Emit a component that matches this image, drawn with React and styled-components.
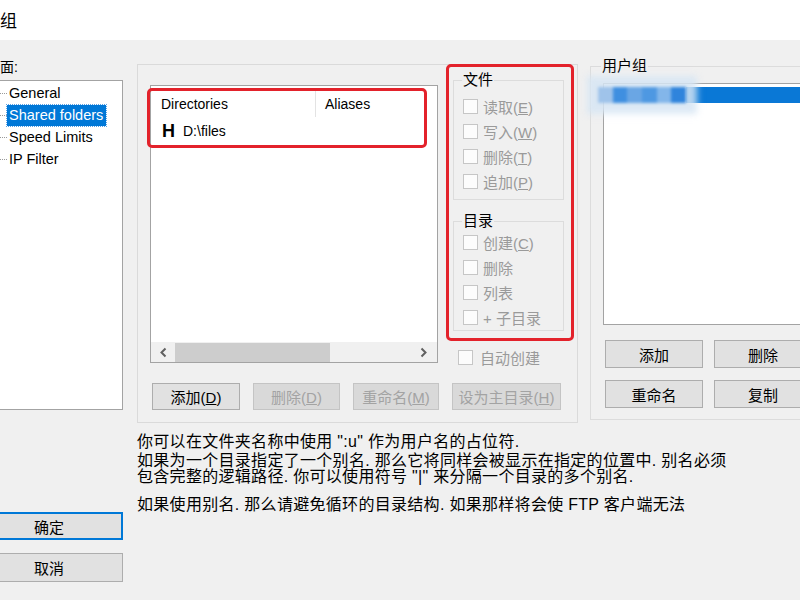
import React from "react";
import styled, { createGlobalStyle } from "styled-components";

const UI_FONT = `"Liberation Sans", "Noto Sans CJK SC", sans-serif`;

const GlobalStyle = createGlobalStyle`
  html, body { margin: 0; padding: 0; background: #f0f0f0; }
  body { font-family: ${UI_FONT}; }
  * { box-sizing: border-box; }
`;

const Window = styled.div`
  width: 800px;
  height: 600px;
  overflow: hidden;
  background: #f0f0f0;
  display: flex;
  flex-direction: column;
  color: #000;
  font-family: ${UI_FONT};
`;

const TitleBar = styled.div`
  height: 40px;
  flex: none;
  background: #fff;
  display: flex;
  align-items: center;
  font-size: 17px;
  padding-bottom: 1px;
`;

const Body = styled.div`
  display: flex;
  align-items: flex-start;
  flex: 1;
`;

// left column: page tree + OK / cancel
const LeftCol = styled.div`
  flex: none;
  width: 148px;
  margin-left: -25px;
  padding-top: 19px;
  display: flex;
  flex-direction: column;
`;

const PageLabel = styled.div`
  height: 16px;
  line-height: 16px;
  font-size: 14px;
  padding-left: 25px;
  white-space: nowrap;
`;

const Tree = styled.div`
  margin-top: 5px;
  height: 330px;
  border: 1px solid #a3a3a3;
  background: #fff;
  padding: 1px 0 0 24px;
`;

const TreeItem = styled.div`
  height: 22px;
  display: flex;
  align-items: center;
`;

const Connector = styled.span`
  width: 7px;
  border-top: 1px dotted #9a9a9a;
`;

const ItemLabel = styled.span`
  height: 21px;
  line-height: 21px;
  padding: 0 3px 0 2px;
  font-size: 14.5px;
  white-space: nowrap;
  background: ${(p) => (p.$selected ? "#0078d7" : "transparent")};
  color: ${(p) => (p.$selected ? "#fff" : "#000")};
  outline: ${(p) => (p.$selected ? "1px dotted #5aa2e6" : "none")};
`;

const DialogButton = styled.button`
  width: 148px;
  height: ${(p) => p.$h}px;
  margin-top: ${(p) => p.$mt}px;
  background: #e1e1e1;
  border: ${(p) => (p.$default ? "2px solid #0078d7" : "1px solid #adadad")};
  font-family: ${UI_FONT};
  font-size: 15px;
  color: #000;
  padding: 0;
`;

// right area: panel, user groups, help text
const RightArea = styled.div`
  flex: none;
  margin-left: 14px;
  padding-top: 17px;
  display: flex;
  flex-direction: column;
`;

const TopRow = styled.div`
  display: flex;
  align-items: flex-start;
`;

const Panel = styled.div`
  margin-top: 7px;
  width: 441px;
  height: 359px;
  border: 1px solid #dadada;
  display: flex;
  flex-direction: column;
`;

const PanelTop = styled.div`
  display: flex;
  align-items: flex-start;
  padding-left: 12px;
`;

const DirList = styled.div`
  margin-top: 20px;
  width: 288px;
  height: 278px;
  border: 1px solid #a3a3a3;
  background: #fff;
  display: flex;
  flex-direction: column;
`;

const ListContent = styled.div`
  flex: 1;
`;

const Highlight = styled.div`
  width: 280px;
  margin: 2px 0 0 -4px;
  border: 3px solid #e3222b;
  border-radius: 5px;
`;

const ListHeader = styled.div`
  height: 26px;
  display: flex;
  font-size: 14px;
`;

const HeaderCell = styled.div`
  width: ${(p) => p.$w};
  padding-left: ${(p) => p.$pl}px;
  display: flex;
  align-items: center;
  border-right: ${(p) => (p.$sep ? "1px solid #e3e3e3" : "none")};
`;

const ListRow = styled.div`
  height: 28px;
  display: flex;
  align-items: center;
  padding-left: 12px;
  gap: 8px;
  font-size: 14px;
`;

const HomeMark = styled.span`
  font-weight: bold;
  font-size: 18px;
`;

const ScrollBar = styled.div`
  height: 20px;
  display: flex;
  align-items: center;
  background: #f0f0f0;
`;

const ScrollArrow = styled.div`
  width: ${(p) => p.$w}px;
  height: 20px;
  display: flex;
  align-items: center;
  justify-content: center;
`;

const ScrollThumb = styled.div`
  width: 155px;
  height: 19px;
  background: #cdcdcd;
`;

const ScrollTrack = styled.div`
  flex: 1;
`;

const ChecksCol = styled.div`
  margin-left: 8px;
  margin-top: -1px;
  display: flex;
  flex-direction: column;
`;

const RedFrame = styled.div`
  width: 128px;
  height: 277px;
  border: 3px solid #e3222b;
  border-radius: 5px;
  padding: 0 7px 0 4px;
`;

const Group = styled.fieldset`
  margin: ${(p) => p.$mt}px 0 0 0;
  padding: ${(p) => p.$pt}px 0 ${(p) => p.$pb}px 8px;
  border: 1px solid #dcdcdc;
  min-width: 0;
`;

const Legend = styled.legend`
  padding: 0 1px;
  margin-left: ${(p) => p.$ml || 0}px;
  font-size: 15px;
  line-height: 18px;
  height: 18px;
`;

const CheckRow = styled.div`
  height: ${(p) => p.$h || 25}px;
  margin-top: ${(p) => p.$mt || 0}px;
  display: flex;
  align-items: center;
  gap: ${(p) => p.$gap || 5}px;
  padding-left: ${(p) => p.$pl || 1}px;
  font-size: 15px;
  color: #9a9a9a;
  white-space: nowrap;
`;

const CheckBox = styled.span`
  width: 15px;
  height: 15px;
  flex: none;
  border: 1px solid #c6c6c6;
  background: #fcfcfc;
`;

const ButtonRow = styled.div`
  display: flex;
  gap: 13px;
  margin-top: 17px;
  padding-left: 14px;
`;

const Button = styled.button`
  width: ${(p) => p.$w}px;
  height: ${(p) => p.$h || 27}px;
  padding: 0;
  background: ${(p) => (p.disabled ? "#d9d9d9" : "#e1e1e1")};
  border: 1px solid ${(p) => (p.disabled ? "#c4c4c4" : "#adadad")};
  color: ${(p) => (p.disabled ? "#a3a3a3" : "#000")};
  font-family: ${UI_FONT};
  font-size: 15px;
  white-space: nowrap;
`;

const UserGroups = styled.fieldset`
  margin: 0 0 0 12px;
  width: 240px;
  padding: 8px 0 11px 12px;
  border: 1px solid #dcdcdc;
  min-width: 0;
`;

const UserList = styled.div`
  height: 242px;
  border: 1px solid #a3a3a3;
  background: #fff;
  padding-top: 3px;
`;

const BlurredRow = styled.div`
  height: 16px;
  display: flex;
`;

const Mosaic = styled.div`
  width: 88px;
  margin-left: -6px;
  display: flex;
  filter: blur(1.5px);
  box-shadow: 0 0 6px 11px rgba(214, 229, 243, 0.85);
  background: rgba(214, 229, 243, 0.85);
`;

const MosaicCell = styled.span`
  flex: 1;
  background: ${(p) => p.$c};
`;

const SelectedBar = styled.div`
  flex: 1;
  background: #0a78d6;
`;

const UserButtons = styled.div`
  margin-top: 15px;
  padding-left: 2px;
  display: grid;
  grid-template-columns: 98px 98px;
  grid-auto-rows: 28px;
  column-gap: 11px;
  row-gap: 12px;
`;

const Help = styled.div`
  margin-top: 11px;
  font-size: 16px;
  line-height: 16px;
  letter-spacing: 0.3px;
  white-space: nowrap;
`;

const HelpPara = styled.p`
  margin: 0 0 ${(p) => p.$mb}px 0;
`;

const Chevron = ({ dir }) => (
  <svg width="9" height="11" viewBox="0 0 9 11">
    <path
      d={dir === "left" ? "M6.5 1.5 L2.5 5.5 L6.5 9.5" : "M2.5 1.5 L6.5 5.5 L2.5 9.5"}
      fill="none"
      stroke="#606060"
      strokeWidth="2"
    />
  </svg>
);

const fileChecks = [
  ["读取", "E"],
  ["写入", "W"],
  ["删除", "T"],
  ["追加", "P"],
];

const dirChecks = [["创建", "C"], ["删除"], ["列表"], ["+ 子目录"]];

const mosaicColors = ["#9fc3ea", "#3f8fe0", "#6aa6e4", "#4e98e2", "#83b6ea", "#2f84dc"];

function App() {
  return (
    <Window>
      <GlobalStyle />
      <TitleBar>组</TitleBar>
      <Body>
        <LeftCol>
          <PageLabel>面:</PageLabel>
          <Tree>
            <TreeItem>
              <Connector />
              <ItemLabel>General</ItemLabel>
            </TreeItem>
            <TreeItem>
              <Connector />
              <ItemLabel $selected>Shared folders</ItemLabel>
            </TreeItem>
            <TreeItem>
              <Connector />
              <ItemLabel>Speed Limits</ItemLabel>
            </TreeItem>
            <TreeItem>
              <Connector />
              <ItemLabel>IP Filter</ItemLabel>
            </TreeItem>
          </Tree>
          <DialogButton $default $h={28} $mt={102}>
            确定
          </DialogButton>
          <DialogButton $h={29} $mt={13}>
            取消
          </DialogButton>
        </LeftCol>

        <RightArea>
          <TopRow>
            <Panel>
              <PanelTop>
                <DirList>
                  <ListContent>
                    <Highlight>
                      <ListHeader>
                        <HeaderCell $w="166px" $pl={11} $sep>
                          Directories
                        </HeaderCell>
                        <HeaderCell $w="auto" $pl={9}>
                          Aliases
                        </HeaderCell>
                      </ListHeader>
                      <ListRow>
                        <HomeMark>H</HomeMark>
                        <span>D:\files</span>
                      </ListRow>
                    </Highlight>
                  </ListContent>
                  <ScrollBar>
                    <ScrollArrow $w={24}>
                      <Chevron dir="left" />
                    </ScrollArrow>
                    <ScrollThumb />
                    <ScrollTrack />
                    <ScrollArrow $w={28}>
                      <Chevron dir="right" />
                    </ScrollArrow>
                  </ScrollBar>
                </DirList>

                <ChecksCol>
                  <RedFrame>
                    <Group $mt={4} $pt={5} $pb={5}>
                      <Legend>文件</Legend>
                      {fileChecks.map(([label, key]) => (
                        <CheckRow key={label}>
                          <CheckBox />
                          <span>
                            {label}(<u>{key}</u>)
                          </span>
                        </CheckRow>
                      ))}
                    </Group>
                    <Group $mt={12} $pt={0} $pb={0}>
                      <Legend>目录</Legend>
                      {dirChecks.map(([label, key]) => (
                        <CheckRow key={label}>
                          <CheckBox />
                          <span>
                            {label}
                            {key && (
                              <>
                                (<u>{key}</u>)
                              </>
                            )}
                          </span>
                        </CheckRow>
                      ))}
                    </Group>
                  </RedFrame>
                  <CheckRow $h={18} $pl={12} $gap={7} $mt={7}>
                    <CheckBox />
                    <span>自动创建</span>
                  </CheckRow>
                </ChecksCol>
              </PanelTop>

              <ButtonRow>
                <Button $w={88}>
                  添加(<u>D</u>)
                </Button>
                <Button $w={87} disabled>
                  删除(<u>D</u>)
                </Button>
                <Button $w={86} disabled>
                  重命名(<u>M</u>)
                </Button>
                <Button $w={109} disabled>
                  设为主目录(<u>H</u>)
                </Button>
              </ButtonRow>
            </Panel>

            <UserGroups>
              <Legend $ml={-2}>用户组</Legend>
              <UserList>
                <BlurredRow>
                  <Mosaic>
                    {mosaicColors.map((c, i) => (
                      <MosaicCell key={i} $c={c} />
                    ))}
                  </Mosaic>
                  <SelectedBar />
                </BlurredRow>
              </UserList>
              <UserButtons>
                <Button $w={98} $h={28}>添加</Button>
                <Button $w={98} $h={28}>删除</Button>
                <Button $w={98} $h={28}>重命名</Button>
                <Button $w={98} $h={28}>复制</Button>
              </UserButtons>
            </UserGroups>
          </TopRow>

          <Help>
            <HelpPara $mb={3}>你可以在文件夹名称中使用 ":u" 作为用户名的占位符.</HelpPara>
            <HelpPara $mb={12}>
              如果为一个目录指定了一个别名. 那么它将同样会被显示在指定的位置中. 别名必须
              <br />
              包含完整的逻辑路径. 你可以使用符号 "|" 来分隔一个目录的多个别名.
            </HelpPara>
            <HelpPara $mb={0}>如果使用别名. 那么请避免循环的目录结构. 如果那样将会使 FTP 客户端无法</HelpPara>
          </Help>
        </RightArea>
      </Body>
    </Window>
  );
}

export default App;
